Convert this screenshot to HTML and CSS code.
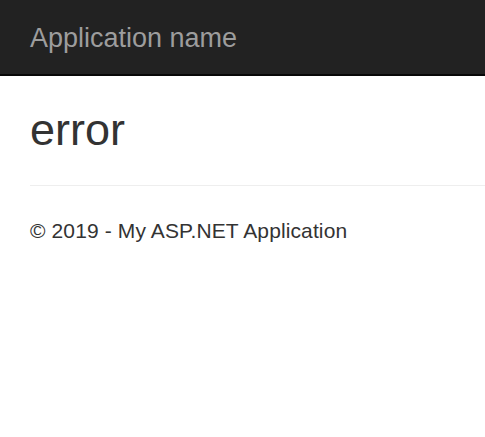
FILE: index.html
```html
<!DOCTYPE html>
<html>
<head>
<meta charset="utf-8">
<title>error</title>
<link rel="stylesheet" href="styles.css">
</head>
<body>
<header class="navbar">
  <a class="brand" href="#">Application name</a>
</header>
<main class="body-content">
  <h2 class="title">error</h2>
  <hr class="rule">
  <footer class="footer">
    <p class="copy">&copy; 2019 - My ASP.NET Application</p>
  </footer>
</main>
</body>
</html>
```

FILE: styles.css
```css
html, body {
  margin: 0;
  padding: 0;
  background: #fff;
}
body {
  font-family: "Liberation Sans", Arial, Helvetica, sans-serif;
  font-size: 21px;
  line-height: 30px;
  color: #333;
}
.navbar {
  display: flex;
  align-items: center;
  height: 76px;
  box-sizing: border-box;
  background: #222;
  border-bottom: 2px solid #080808;
  padding-left: 30px;
}
.brand {
  font-size: 27px;
  line-height: 30px;
  color: #9d9d9d;
  text-decoration: none;
  padding-top: 1px;
}
.body-content {
  padding: 0 30px;
}
.title {
  margin: 29px 0 15px;
  font-size: 45px;
  line-height: 49.5px;
  font-weight: 500;
  color: #333;
}
.rule {
  margin: 30px -30px 30px 0;
  border: 0;
  border-top: 1.5px solid #eee;
  height: 0;
}
.footer {
  display: block;
}
.copy {
  margin: 0 0 15px;
  letter-spacing: 0.12px;
}
```
